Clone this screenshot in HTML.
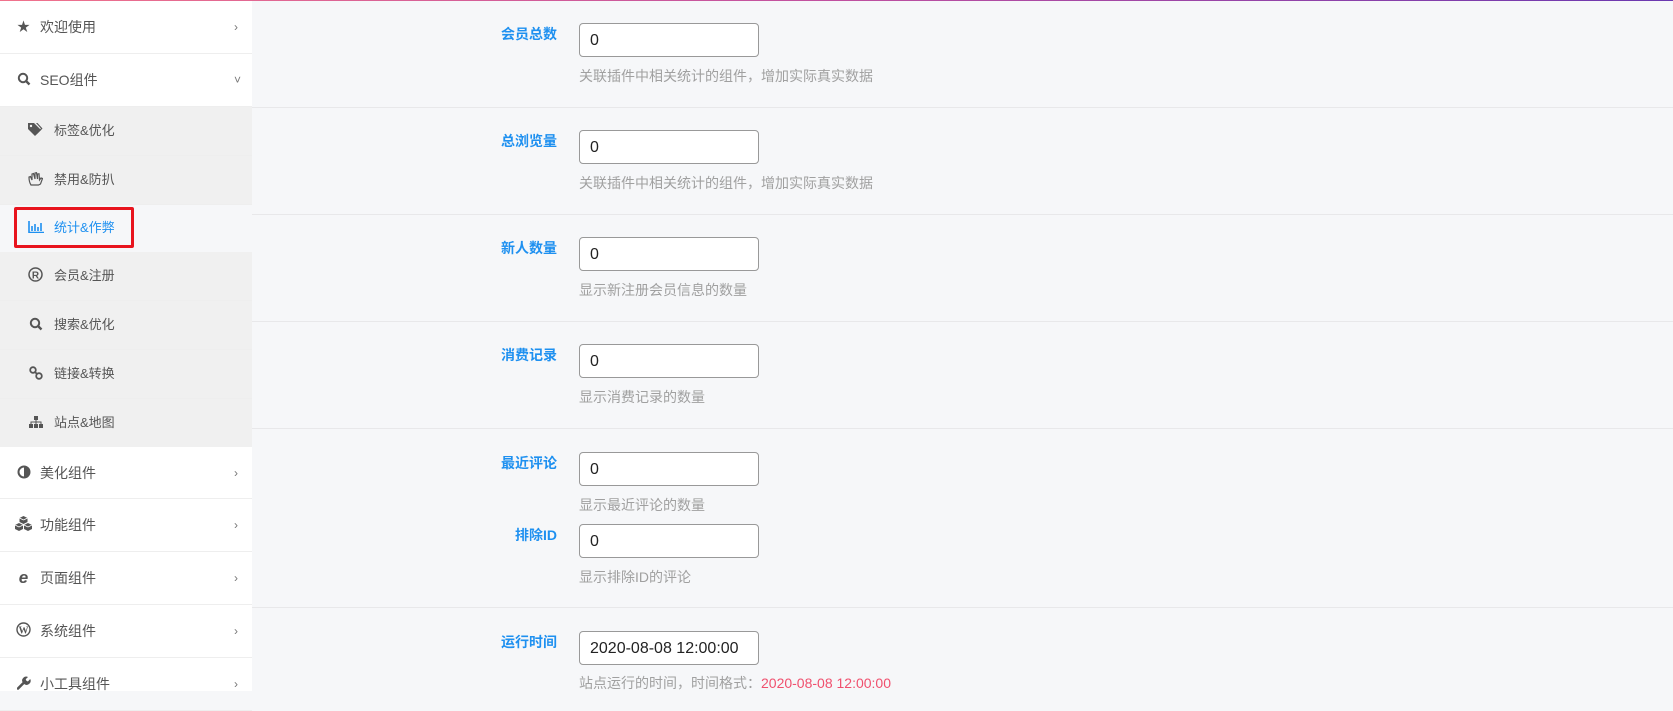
<!DOCTYPE html><html><head><meta charset="utf-8"><style>
*{margin:0;padding:0;box-sizing:border-box}
body{width:1673px;height:691px;overflow:hidden;background:#f6f7f9;font-family:"Liberation Sans","Noto Sans CJK SC",sans-serif;position:relative}
.top{position:absolute;left:0;top:0;width:1673px;height:1px;background:linear-gradient(90deg,#f0728c,#c050a0 50%,#6a38b0)}
.side{position:absolute;left:0;top:1px;width:252px;height:690px;background:#fff}
.it{position:absolute;left:0;width:252px;font-size:14px;color:#555;border-bottom:1px solid #eee}
.it .ic{position:absolute;left:16px;width:15px;height:15px;color:#555;font-size:13px;text-align:center}
.it .ic svg{vertical-align:-2px}
.it .tx{position:absolute;left:40px}
.it .ch{position:absolute;left:234px;font-size:12px;color:#777}
.sub{background:#f0f0f0;font-size:13px}
.sub .ic{left:28px}.sub .tx{left:54px}
.act{background:#f6f7f9;color:#1e90f0}
.red{position:absolute;left:14px;top:206px;width:120px;height:41px;border:3px solid #e8141e;border-radius:2px}
.row{position:absolute;left:252px;width:1421px;border-bottom:1px solid #e8e8ea}
.lb{position:absolute;width:120px;left:437px;text-align:right;font-size:14px;font-weight:bold;color:#1e90f0}
.in{position:absolute;left:579px;width:180px;height:34px;border:1px solid #999;border-radius:4px;background:#fff;font-size:16px;color:#222;padding:8px 10px;line-height:18px}
.hp{position:absolute;left:579px;font-size:14px;color:#a0a0a0}
.hp b{font-weight:normal;color:#f0506e}
</style></head><body>
<div class="top"></div>
<div class="side">
<div class="it" style="top:0;height:53px;line-height:52px"><span class="ic">★</span><span class="tx">欢迎使用</span><span class="ch">›</span></div>
<div class="it" style="top:53px;height:53px;line-height:52px"><span class="ic"><svg width="14" height="14" viewBox="0 0 14 14"><circle cx="6" cy="6" r="4.2" fill="none" stroke="#555" stroke-width="2"/><path d="M9 9l3.5 3.5" stroke="#555" stroke-width="2.4"/></svg></span><span class="tx">SEO组件</span><span class="ch">˅</span></div>
<div class="it sub" style="top:106px;height:49px;line-height:48px"><span class="ic"><svg width="15" height="14" viewBox="0 0 15 14"><path d="M0 0h6l7 7-6 6-7-7z" fill="#555"/><circle cx="3" cy="3" r="1.2" fill="#f0f0f0"/><path d="M8 0h1.5l5 5.5-6 6-0.8-0.8 5.2-5.2z" fill="#555"/></svg></span><span class="tx">标签&amp;优化</span></div>
<div class="it sub" style="top:155px;height:49px;line-height:48px"><span class="ic"><svg width="15" height="14" viewBox="0 0 15 14"><path d="M3 13C1 10 1 7 1 5l1.5-.5L4 8V2l1.5-.5L7 7V1l1.5-.3L9.5 7V2L11 1.8 11.5 8l1.5-2 1.5.5-2 5.5-2 1z" fill="none" stroke="#555" stroke-width="1.2"/></svg></span><span class="tx">禁用&amp;防扒</span></div>
<div class="it sub act" style="top:204px;height:47px;line-height:46px;border:0"><span class="ic"><svg width="16" height="12" viewBox="0 0 16 12" style="vertical-align:-1px"><path d="M1 0v11.5h15M4 10V5M7 10V3M10 10V6M13 10V2" stroke="#1e90f0" stroke-width="1.6" fill="none"/></svg></span><span class="tx" style="color:#1e90f0">统计&amp;作弊</span></div>
<div class="it sub" style="top:251px;height:49px;line-height:48px"><span class="ic"><svg width="15" height="15" viewBox="0 0 15 15"><circle cx="7.5" cy="7.5" r="6.5" fill="none" stroke="#555" stroke-width="1.5"/><text x="7.5" y="11.5" font-size="10" font-weight="bold" text-anchor="middle" fill="#555" font-family="Liberation Sans">R</text></svg></span><span class="tx">会员&amp;注册</span></div>
<div class="it sub" style="top:300px;height:49px;line-height:48px"><span class="ic"><svg width="14" height="14" viewBox="0 0 14 14"><circle cx="6" cy="6" r="4.2" fill="none" stroke="#555" stroke-width="2"/><path d="M9 9l3.5 3.5" stroke="#555" stroke-width="2.4"/></svg></span><span class="tx">搜索&amp;优化</span></div>
<div class="it sub" style="top:349px;height:49px;line-height:48px"><span class="ic"><svg width="14" height="14" viewBox="0 0 14 14"><circle cx="4" cy="4" r="2.8" fill="none" stroke="#555" stroke-width="1.8"/><circle cx="10" cy="10" r="2.8" fill="none" stroke="#555" stroke-width="1.8"/><path d="M5.5 5.5l3 3" stroke="#555" stroke-width="1.8"/></svg></span><span class="tx">链接&amp;转换</span></div>
<div class="it sub" style="top:398px;height:48px;line-height:48px;border:0"><span class="ic"><svg width="14" height="12" viewBox="0 0 14 12" style="vertical-align:-1px"><rect x="5" y="0" width="4" height="4" fill="#555"/><rect x="0" y="8" width="4" height="4" fill="#555"/><rect x="5" y="8" width="4" height="4" fill="#555"/><rect x="10" y="8" width="4" height="4" fill="#555"/><path d="M2 8V6h10v2M7 4v4" stroke="#555" fill="none"/></svg></span><span class="tx">站点&amp;地图</span></div>
<div class="it" style="top:446px;height:52px;line-height:52px"><span class="ic"><svg width="14" height="14" viewBox="0 0 14 14"><circle cx="7" cy="7" r="5.5" fill="none" stroke="#555" stroke-width="2"/><path d="M7 1.5a5.5 5.5 0 0 1 0 11z" fill="#555"/></svg></span><span class="tx">美化组件</span><span class="ch">›</span></div>
<div class="it" style="top:498px;height:53px;line-height:52px"><span class="ic" style="left:13px;width:20px"><svg width="19" height="15" viewBox="0 0 19 15"><path d="M9.5 0l4 2v4l-4 2-4-2V2z" fill="#555"/><path d="M5 7l4 2v4l-4 2-4-2V9z" fill="#555"/><path d="M14 7l4 2v4l-4 2-4-2V9z" fill="#555"/><path d="M9.5 4L5.5 2M9.5 4l4-2M5 11L1 9M5 11l4-2M14 11l-4-2M14 11l4-2" stroke="#fff" stroke-width=".8"/></svg></span><span class="tx">功能组件</span><span class="ch">›</span></div>
<div class="it" style="top:551px;height:53px;line-height:52px"><span class="ic" style="font-weight:bold;font-style:italic;font-size:17px">e</span><span class="tx">页面组件</span><span class="ch">›</span></div>
<div class="it" style="top:604px;height:53px;line-height:52px"><span class="ic"><svg width="15" height="15" viewBox="0 0 15 15"><circle cx="7.5" cy="7.5" r="6.5" fill="none" stroke="#555" stroke-width="1.4"/><text x="7.5" y="11.3" font-size="10" font-weight="bold" text-anchor="middle" fill="#555" font-family="Liberation Serif">W</text></svg></span><span class="tx">系统组件</span><span class="ch">›</span></div>
<div class="it" style="top:657px;height:53px;line-height:52px"><span class="ic"><svg width="14" height="14" viewBox="0 0 14 14"><path d="M1 12.5L7 6.5" stroke="#555" stroke-width="2.6" stroke-linecap="round"/><path d="M6 7a4 4 0 0 1 5-6l-2.3 2.3.7 1.5 1.5.7L13.2 3a4 4 0 0 1-6 5z" fill="#555"/></svg></span><span class="tx">小工具组件</span><span class="ch">›</span></div>
<div class="red"></div>
</div>
<div class="row" style="top:1px;height:107px"></div>
<div class="row" style="top:108px;height:107px"></div>
<div class="row" style="top:215px;height:107px"></div>
<div class="row" style="top:322px;height:107px"></div>
<div class="row" style="top:429px;height:179px"></div>
<div class="lb" style="top:24px">会员总数</div><div class="in" style="top:23px">0</div><div class="hp" style="top:66px">关联插件中相关统计的组件，增加实际真实数据</div>
<div class="lb" style="top:131px">总浏览量</div><div class="in" style="top:130px">0</div><div class="hp" style="top:173px">关联插件中相关统计的组件，增加实际真实数据</div>
<div class="lb" style="top:238px">新人数量</div><div class="in" style="top:237px">0</div><div class="hp" style="top:280px">显示新注册会员信息的数量</div>
<div class="lb" style="top:345px">消费记录</div><div class="in" style="top:344px">0</div><div class="hp" style="top:387px">显示消费记录的数量</div>
<div class="lb" style="top:453px">最近评论</div><div class="in" style="top:452px">0</div><div class="hp" style="top:495px">显示最近评论的数量</div>
<div class="lb" style="top:525px">排除ID</div><div class="in" style="top:524px">0</div><div class="hp" style="top:567px">显示排除ID的评论</div>
<div class="lb" style="top:632px">运行时间</div><div class="in" style="top:631px">2020-08-08 12:00:00</div><div class="hp" style="top:673px">站点运行的时间，时间格式：<b>2020-08-08 12:00:00</b></div>
</body></html>
